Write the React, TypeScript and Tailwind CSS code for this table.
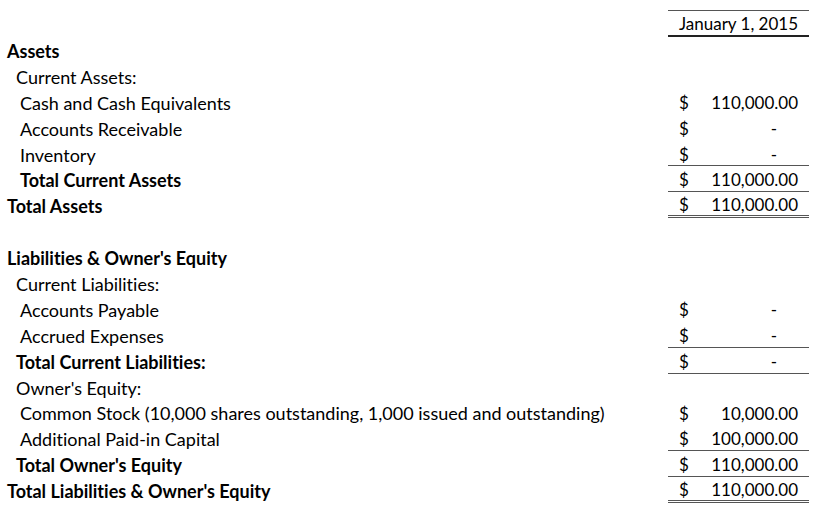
type Line = "none" | "single" | "double";

type Row = {
  label: string;
  indent: 0 | 1 | 2;
  bold?: boolean;
  value?: string;
  line?: Line;
};

const rows: Row[] = [
  { label: "Assets", indent: 0, bold: true },
  { label: "Current Assets:", indent: 1 },
  { label: "Cash and Cash Equivalents", indent: 2, value: "110,000.00" },
  { label: "Accounts Receivable", indent: 2, value: "-" },
  { label: "Inventory", indent: 2, value: "-", line: "single" },
  { label: "Total Current Assets", indent: 2, bold: true, value: "110,000.00", line: "single" },
  { label: "Total Assets", indent: 0, bold: true, value: "110,000.00", line: "double" },
  { label: "", indent: 0 },
  { label: "Liabilities & Owner's Equity", indent: 0, bold: true },
  { label: "Current Liabilities:", indent: 1 },
  { label: "Accounts Payable", indent: 2, value: "-" },
  { label: "Accrued Expenses", indent: 2, value: "-", line: "single" },
  { label: "Total Current Liabilities:", indent: 1, bold: true, value: "-", line: "single" },
  { label: "Owner's Equity:", indent: 1 },
  { label: "Common Stock (10,000 shares outstanding, 1,000 issued and outstanding)", indent: 2, value: "10,000.00" },
  { label: "Additional Paid-in Capital", indent: 2, value: "100,000.00", line: "single" },
  { label: "Total Owner's Equity", indent: 1, bold: true, value: "110,000.00", line: "single" },
  { label: "Total Liabilities & Owner's Equity", indent: 0, bold: true, value: "110,000.00", line: "double" },
];

const indentClass = {
  0: "pl-0",
  1: "pl-[9px]",
  2: "pl-[13px]",
};

const lineClass = {
  none: "",
  single: "border-b border-[#555]",
  double: "border-b-[3px] border-double border-[#555]",
};

function Amount({ value }: { value?: string }) {
  if (!value) return null;
  const dash = value === "-";
  return (
    <div className="flex h-full items-center justify-between pl-[11px] pr-[11px] pt-[2px]">
      <span>$</span>
      <span className={dash ? "pr-[21px]" : ""}>{value}</span>
    </div>
  );
}

export default function App() {
  return (
    <div
      className="w-[819px] h-[516px] bg-white text-black pl-[7px] pr-[10px] pt-[10px] text-[17px] leading-none [font-variant-ligatures:none]"
      style={{ fontFamily: "Lato, 'Liberation Sans', sans-serif" }}
    >
      <div className="flex h-[27px]">
        <div className="flex-1" />
        <div className="w-[141px] border-t border-[#555] border-b-2 border-b-[#222] flex items-center justify-center pt-[1px]">
          January 1, 2015
        </div>
      </div>
      {rows.map((r, i) => (
        <div key={i} className="flex h-[25.9px]">
          <div
            className={`flex-1 flex items-center whitespace-nowrap text-[18px] pt-[2px] ${indentClass[r.indent]} ${
              r.bold ? "font-bold" : ""
            }`}
          >
            {r.label}
          </div>
          <div className={`w-[141px] ${lineClass[r.line ?? "none"]}`}>
            <Amount value={r.value} />
          </div>
        </div>
      ))}
    </div>
  );
}
